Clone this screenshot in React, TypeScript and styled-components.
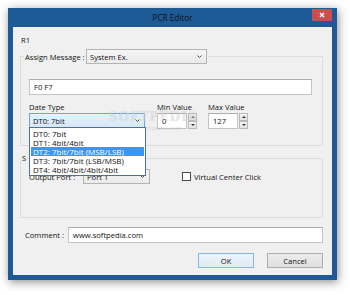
import { createGlobalStyle, styled } from 'styled-components'

const GlobalStyle = createGlobalStyle`
  html, body {
    margin: 0;
    padding: 0;
    background: #ffffff;
  }
  body {
    font-family: "Open Sans", "Noto Sans", sans-serif;
    font-size: 7.6px;
    color: #111111;
  }
  * {
    box-sizing: border-box;
  }
`

const Desktop = styled.div`
  width: 350px;
  height: 295px;
  padding: 8px 0 0 8px;
`

const Window = styled.div`
  position: relative;
  width: 329px;
  height: 272px;
  display: flex;
  flex-direction: column;
  background: #1e5a96;
  box-shadow: 1px 2px 9px rgba(0, 0, 0, 0.45);
`

const TitleBar = styled.div`
  height: 19px;
  flex: none;
  display: grid;
  grid-template-columns: 1fr auto 1fr;
  align-items: center;
`

const Title = styled.div`
  grid-column: 2;
  font-size: 8.2px;
  color: #111111;
`

const CloseButton = styled.div`
  grid-column: 3;
  justify-self: end;
  align-self: start;
  width: 20px;
  height: 12px;
  margin: 1px 5px 0 0;
  background: #c75050;
  display: flex;
  align-items: center;
  justify-content: center;
`

const Client = styled.div`
  flex: 1;
  margin: 0 5px 5px;
  background: #f0f0f0;
  padding: 8px 9px 0 7px;
  display: flex;
  flex-direction: column;
`

const Caption = styled.div`
  height: 10px;
  line-height: 10px;
  margin-left: 1px;
`

const Group = styled.fieldset<{ $top: number }>`
  margin: ${(p) => p.$top}px 0 0;
  padding: 0;
  min-width: 0;
  border: 1px solid #dcdcdc;
`

const Legend = styled.legend<{ $indent: number }>`
  margin-left: ${(p) => p.$indent}px;
  padding: 0 1px;
  display: flex;
  align-items: center;
  height: ${(p) => (p.$indent ? 15 : 10)}px;
  line-height: 10px;
`

const GroupBody = styled.div<{ $pad: string }>`
  padding: ${(p) => p.$pad};
  display: flex;
  flex-direction: column;
`

const Label = styled.span<{ $width?: number }>`
  line-height: 10px;
  white-space: nowrap;
  flex: none;
  width: ${(p) => (p.$width ? `${p.$width}px` : 'auto')};
`

const ComboBox = styled.div<{ $width: number; $focused?: boolean }>`
  position: relative;
  width: ${(p) => p.$width}px;
  height: 15px;
  flex: none;
  display: flex;
  align-items: center;
  justify-content: space-between;
  padding: 0 4px 0 3px;
  border: 1px solid ${(p) => (p.$focused ? '#6ea7df' : '#b4b4b4')};
  background: ${(p) =>
    p.$focused
      ? 'linear-gradient(#e6f1fc, #d7e8f9)'
      : 'linear-gradient(#f5f5f5, #ebebeb)'};
`

const DropList = styled.div`
  position: absolute;
  top: 100%;
  left: -1px;
  width: calc(100% + 3px);
  z-index: 5;
  padding: 1px;
  background: #ffffff;
  border: 1px solid #4f6f98;
`

const DropItem = styled.div<{ $selected?: boolean }>`
  height: 9px;
  line-height: 9px;
  padding-left: 2px;
  font-size: 8px;
  white-space: nowrap;
  color: ${(p) => (p.$selected ? '#ffffff' : '#111111')};
  background: ${(p) => (p.$selected ? '#3399ff' : 'transparent')};
`

const TextBox = styled.div<{ $height: number }>`
  height: ${(p) => p.$height}px;
  display: flex;
  align-items: center;
  padding-left: 4px;
  background: #ffffff;
  border: 1px solid #c2c4ca;
  border-top-color: #abadb3;
`

const FieldRow = styled.div`
  display: flex;
  align-items: flex-start;
  margin-top: 7px;
`

const Field = styled.div<{ $gap: number }>`
  display: flex;
  flex-direction: column;
  gap: 1px;
  margin-left: ${(p) => p.$gap}px;
`

const Spin = styled.div`
  display: flex;
  gap: 1px;
`

const SpinInput = styled(TextBox)`
  width: 30px;
`

const SpinButtons = styled.div`
  display: flex;
  flex-direction: column;
`

const SpinButton = styled.div<{ $down?: boolean }>`
  width: 9px;
  height: 8px;
  display: flex;
  align-items: center;
  justify-content: center;
  border: 1px solid #b9b9b9;
  background: linear-gradient(#f4f4f4, #e4e4e4);

  &::after {
    content: '';
    border-left: 2px solid transparent;
    border-right: 2px solid transparent;
    ${(p) => (p.$down ? 'border-top: 2px solid #303030;' : 'border-bottom: 2px solid #303030;')}
  }
`

const PortRow = styled.div`
  display: flex;
  align-items: center;
`

const CheckLabel = styled.label`
  display: flex;
  align-items: center;
  gap: 3px;
  margin-left: 32px;
`

const CheckBox = styled.span`
  width: 9px;
  height: 9px;
  border: 1px solid #4a4a4a;
  background: #ffffff;
`

const CommentRow = styled.div`
  display: flex;
  align-items: center;
  margin-top: 9px;
  padding-left: 5px;
`

const CommentBox = styled(TextBox)`
  flex: 1;
`

const ButtonRow = styled.div`
  display: flex;
  justify-content: flex-end;
  gap: 13px;
  margin-top: 10px;
`

const Button = styled.div<{ $default?: boolean }>`
  width: 56px;
  height: 15px;
  display: flex;
  align-items: center;
  justify-content: center;
  border: 1px solid ${(p) => (p.$default ? '#84b6e6' : '#adadad')};
  background: ${(p) =>
    p.$default ? 'linear-gradient(#ecf4fc, #e1ebf6)' : 'linear-gradient(#ececec, #e0e0e0)'};
`

const Watermark = styled.div`
  position: absolute;
  left: 101px;
  top: 102px;
  pointer-events: none;
  display: flex;
  flex-direction: column;
  align-items: center;
`

const WatermarkBig = styled.span`
  font-family: "DejaVu Serif", serif;
  font-weight: bold;
  font-size: 12px;
  letter-spacing: 1px;
  color: rgba(255, 255, 255, 0.45);
  text-shadow: 0 0 1px rgba(0, 0, 0, 0.18);
`

const WatermarkSmall = styled.span`
  font-size: 6px;
  color: rgba(150, 150, 150, 0.35);
`

function Chevron() {
  return (
    <svg width="5" height="3" viewBox="0 0 5 3">
      <path d="M0.5 0.5 L2.5 2.5 L4.5 0.5" fill="none" stroke="#404040" strokeWidth="0.9" />
    </svg>
  )
}

const dataTypes = [
  'DT0: 7bit',
  'DT1: 4bit/4bit',
  'DT2: 7bit/7bit (MSB/LSB)',
  'DT3: 7bit/7bit (LSB/MSB)',
  'DT4: 4bit/4bit/4bit/4bit',
]

function SpinBox(props: { value: string }) {
  return (
    <Spin>
      <SpinInput $height={16}>{props.value}</SpinInput>
      <SpinButtons>
        <SpinButton />
        <SpinButton $down />
      </SpinButtons>
    </Spin>
  )
}

function App() {
  return (
    <Desktop>
      <GlobalStyle />
      <Window>
        <TitleBar>
          <Title>PCR Editor</Title>
          <CloseButton>
            <svg width="6" height="6" viewBox="0 0 6 6">
              <path d="M1 1 L5 5 M5 1 L1 5" stroke="#ffffff" strokeWidth="1.4" />
            </svg>
          </CloseButton>
        </TitleBar>
        <Client>
          <Caption>R1</Caption>
          <Group $top={4}>
            <Legend $indent={3}>
              <Label $width={61}>Assign Message :</Label>
              <ComboBox $width={121}>
                System Ex.
                <Chevron />
              </ComboBox>
            </Legend>
            <GroupBody $pad="15px 10px 16px 8px">
              <TextBox $height={16}>F0 F7</TextBox>
              <FieldRow>
                <Field $gap={0}>
                  <Label>Date Type</Label>
                  <ComboBox $width={116} $focused>
                    DT0: 7bit
                    <Chevron />
                    <DropList>
                      {dataTypes.map((t, i) => (
                        <DropItem key={t} $selected={i === 2}>
                          {t}
                        </DropItem>
                      ))}
                    </DropList>
                  </ComboBox>
                </Field>
                <Field $gap={12}>
                  <Label>Min Value</Label>
                  <SpinBox value="0" />
                </Field>
                <Field $gap={11}>
                  <Label>Max Value</Label>
                  <SpinBox value="127" />
                </Field>
              </FieldRow>
            </GroupBody>
          </Group>
          <Group $top={7}>
            <Legend $indent={0}>S</Legend>
            <GroupBody $pad="6px 10px 33px 8px">
              <PortRow>
                <Label $width={54}>Output Port :</Label>
                <ComboBox $width={67}>
                  Port 1
                  <Chevron />
                </ComboBox>
                <CheckLabel>
                  <CheckBox />
                  Virtual Center Click
                </CheckLabel>
              </PortRow>
            </GroupBody>
          </Group>
          <CommentRow>
            <Label $width={43}>Comment :</Label>
            <CommentBox $height={16}>www.softpedia.com</CommentBox>
          </CommentRow>
          <ButtonRow>
            <Button $default>OK</Button>
            <Button>Cancel</Button>
          </ButtonRow>
        </Client>
        <Watermark>
          <WatermarkBig>SOFTPEDIA</WatermarkBig>
          <WatermarkSmall>www.softpedia.com</WatermarkSmall>
        </Watermark>
      </Window>
    </Desktop>
  )
}

export default App
